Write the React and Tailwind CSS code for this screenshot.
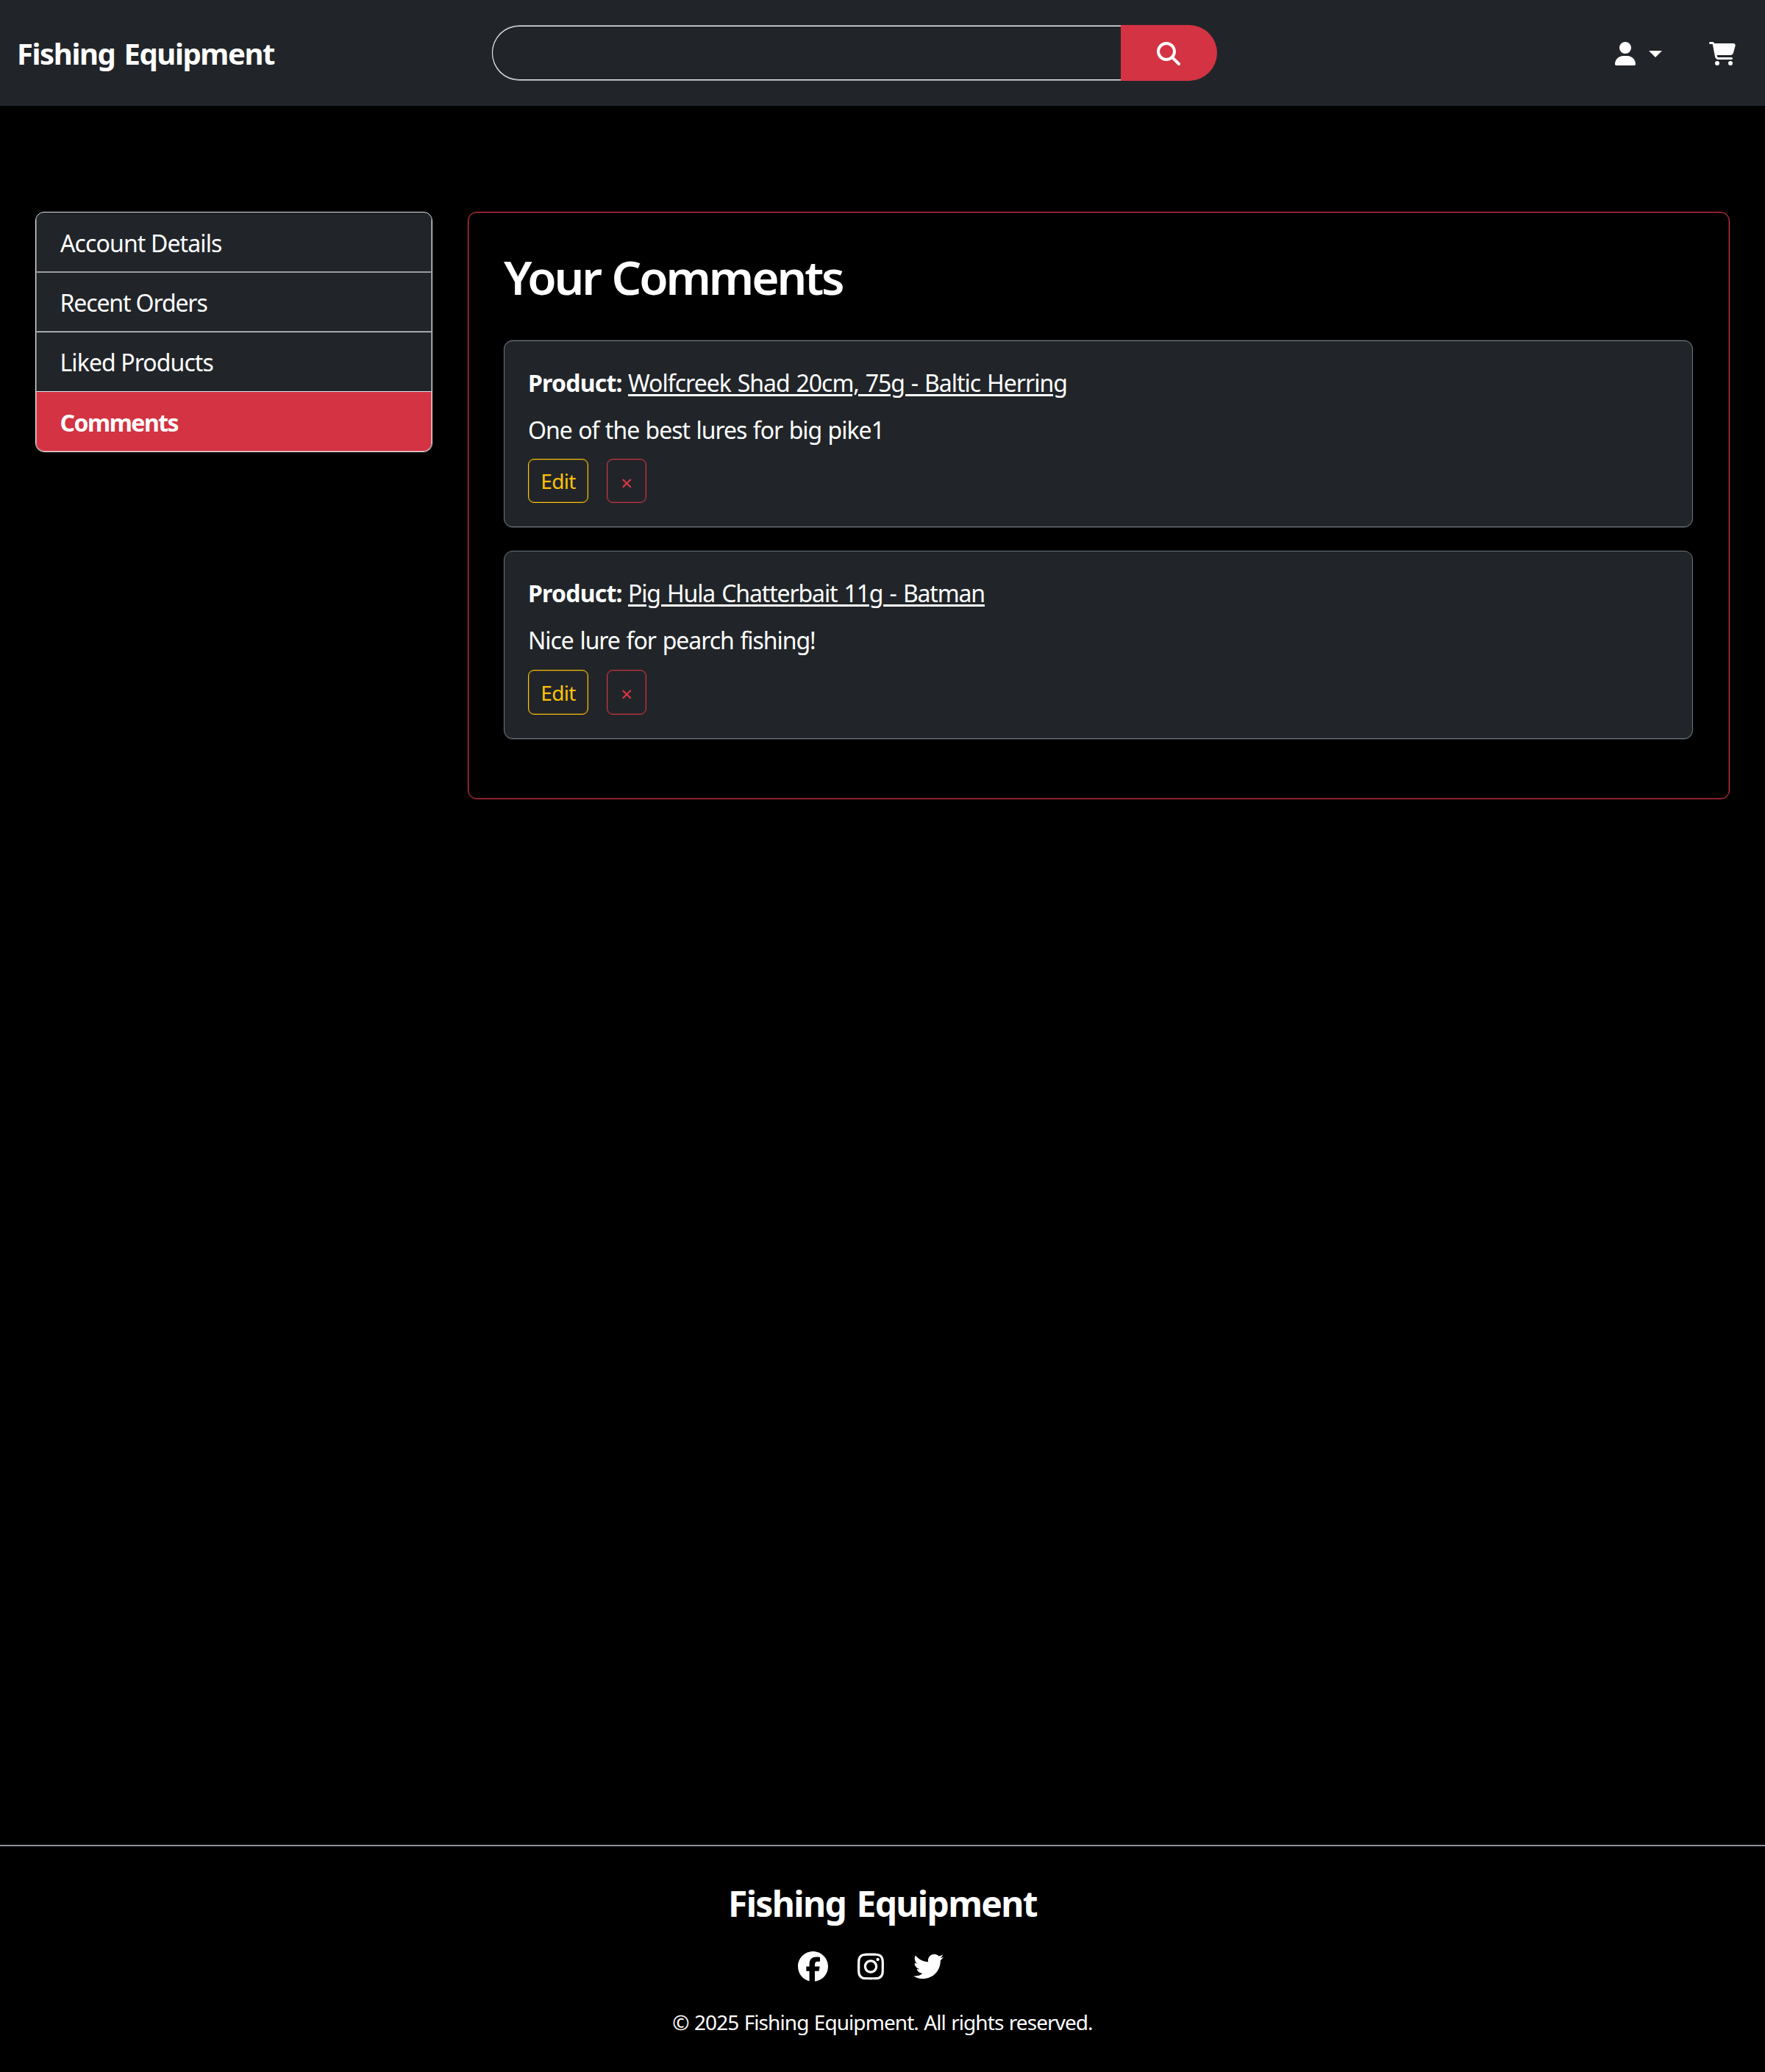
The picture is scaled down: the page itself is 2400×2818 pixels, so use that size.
import { FaCartShopping, FaFacebook, FaInstagram, FaMagnifyingGlass, FaTwitter, FaUser } from "react-icons/fa6";

function Header() {
  return (
    <header className="flex h-[144px] items-start bg-[#212529]">
      <a className="ml-[23px] mt-[43px] w-[646px] whitespace-nowrap text-[40px] leading-[60px] font-bold tracking-[-1.4px] [word-spacing:3px]">
        Fishing Equipment
      </a>
      <form className="mt-[35px] flex h-[74px] w-[986px]">
        <div className="w-[855px] rounded-l-[37px] border border-r-0 border-white shadow-[0_1px_0_0_rgba(255,255,255,0.4),0_-1px_0_0_rgba(255,255,255,0.4)]" />
        <button
          type="button"
          className="-my-px flex h-[76px] w-[131px] items-center justify-center rounded-r-[38px] bg-[#d33342] pt-0.5 pr-0.5"
        >
          <FaMagnifyingGlass size={32} />
        </button>
      </form>
      <nav className="ml-auto mr-[40px] mt-[57px] flex h-8 items-center">
        <FaUser className="h-8 w-7" />
        <span className="ml-[18px] mt-[1px] border-x-[9px] border-t-[9px] border-x-transparent border-t-white" />
        <FaCartShopping className="ml-[64px] h-8 w-9" />
      </nav>
    </header>
  );
}

const links = [
  { label: "Account Details", cls: "h-[80px] border-x-[#6b6e72] pt-[3px] pl-[32px] tracking-[-0.88px]" },
  { label: "Recent Orders", cls: "h-[82px] border-t-2 border-b border-x-[#6b6e72] border-t-[#999b9e] border-b-[#6b6e72] pt-[2px] pl-[31.5px] tracking-[-1.13px]" },
  { label: "Liked Products", cls: "h-[81px] border-t border-x-[#6b6e72] border-t-[#dee2e6] pt-[1px] pl-[31.5px] tracking-[-0.91px]" },
  { label: "Comments", cls: "h-[82px] rounded-b-[11px] border-t border-b border-x-[#e08a92] border-t-[#dee2e6] border-b-[#e08a92] bg-[#d33342] pt-[4px] pl-[31.5px] font-bold tracking-[-1.53px]" },
];

function Sidebar() {
  return (
    <aside className="h-[327px] w-[540px] shrink-0 overflow-hidden rounded-[12px] border border-[#dee2e6] bg-[#212529]">
      {links.map((l) => (
        <a key={l.label} className={"flex items-center border-x text-[32px] leading-[48px] " + l.cls}>
          {l.label}
        </a>
      ))}
    </aside>
  );
}

function Comment({ product, text, productCls, textCls, cardCls, actionsCls }) {
  return (
    <article className={"rounded-[12px] border-[#6c757d] bg-[#212529] px-[32px] " + cardCls}>
      <p className="text-[32px] leading-[48px] whitespace-nowrap">
        <strong className="inline-block w-[136px] font-bold tracking-[-0.78px]">Product:</strong>
        <a className={"underline decoration-[2.5px] underline-offset-[3px] " + productCls}>{product}</a>
      </p>
      <p className={"mt-[16px] text-[32px] leading-[48px] " + textCls}>{text}</p>
      <div className={"flex gap-[25px] " + actionsCls}>
        <button type="button" className="flex w-[82px] items-center justify-center rounded-[8px] border border-[#ffc107] text-[28px] leading-[42px] tracking-[-0.67px] text-[#ffc107] shadow-[inset_0_0_0_1px_rgba(255,193,7,0.25)]">
          Edit
        </button>
        <button type="button" className="flex w-[54px] items-center justify-center rounded-[8px] border border-[#cb3343] pt-[3px] text-[28px] leading-[42px] text-[#dc3545] shadow-[inset_0_0_0_1px_rgba(220,53,69,0.25)]">
          ×
        </button>
      </div>
    </article>
  );
}

function Footer() {
  return (
    <footer className="mt-auto flex h-[309px] flex-col items-center border-t-2 border-[#90959a]">
      <h2 className="mt-[48px] text-[48px] leading-[60px] font-bold tracking-[-1.67px] [word-spacing:3.5px]">Fishing Equipment</h2>
      <div className="mt-[35px] flex h-[40px] w-[230px] items-center">
        <FaFacebook className="h-[41px] w-[41px]" />
        <FaInstagram className="ml-[40px] h-[41px] w-[36px]" />
        <FaTwitter className="ml-[40px] h-[41px] w-[41px]" />
      </div>
      <p className="mt-[35px] text-[28px] leading-[42px] tracking-[-0.93px] [word-spacing:1px]">
        © 2025 Fishing Equipment. All rights reserved.
      </p>
    </footer>
  );
}

export default function App() {
  return (
    <div className="flex h-[2818px] w-[2400px] flex-col bg-black font-['Noto_Sans',sans-serif] text-white">
      <Header />
      <main className="mt-[144px] flex items-start gap-[48px] pl-[48px]">
        <Sidebar />
        <section className="h-[799px] w-[1716px] rounded-[12px] border border-[#d33342] pr-[49px] pl-[48px] shadow-[inset_0_0_0_1px_rgba(211,51,66,0.3)]">
          <h1 className="mt-[49px] text-[64px] leading-[77px] font-semibold tracking-[-3.13px] [word-spacing:2px]">
            Your Comments
          </h1>
          <Comment
            product="Wolfcreek Shad 20cm, 75g - Baltic Herring"
            text="One of the best lures for big pike1"
            productCls="tracking-[-1px] [word-spacing:1.5px]"
            textCls="tracking-[-1px] [word-spacing:1px]"
            cardCls="mt-[48px] h-[254px] border pt-[33px] shadow-[0_1px_0_0_rgba(108,117,125,0.35),0_-1px_0_0_rgba(108,117,125,0.35)]"
            actionsCls="mt-[15px] h-[60px]"
          />
          <Comment
            product="Pig Hula Chatterbait 11g - Batman"
            text="Nice lure for pearch fishing!"
            productCls="tracking-[-1.15px] [word-spacing:2px]"
            textCls="tracking-[-1.07px] [word-spacing:1.5px]"
            cardCls="mt-[32px] h-[256px] border pt-[33px] shadow-[0_1px_0_0_rgba(108,117,125,0.35)]"
            actionsCls="mt-[16px] h-[61px]"
          />
        </section>
      </main>
      <Footer />
    </div>
  );
}
